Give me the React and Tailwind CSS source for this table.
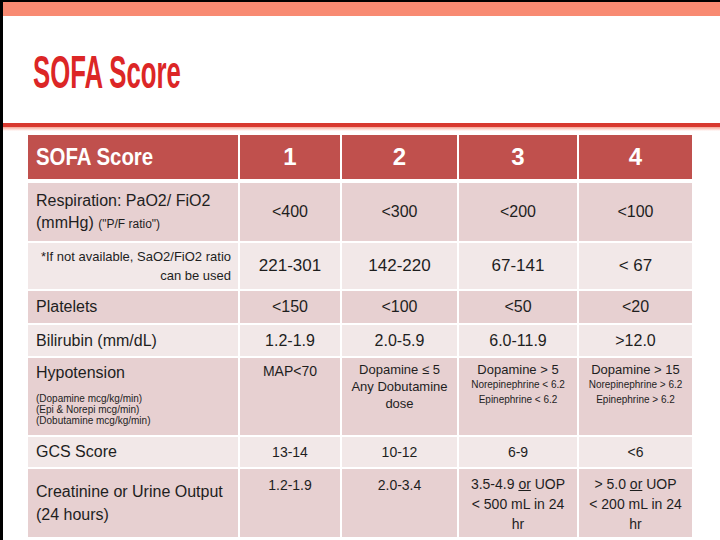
const font = { fontFamily: '"Liberation Sans", Arial, sans-serif' };

const cols = ["w-[210px]", "w-[100px]", "w-[115px]", "w-[118px]", "w-[113px]"];

const Cell = ({ i, className = "", children }) => (
  <div className={`${cols[i]} shrink-0 ${className}`}>{children}</div>
);

const SimpleRow = ({ h, bg, label, values, size = "text-[16px]" }) => (
  <div className={`flex gap-[2px] ${h}`}>
    <Cell i={0} className={`${bg} flex items-center pl-[8px] text-[16px]`}>
      {label}
    </Cell>
    {values.map((v, k) => (
      <Cell key={k} i={k + 1} className={`${bg} flex items-center justify-center ${size}`}>
        {v}
      </Cell>
    ))}
  </div>
);

export default function App() {
  const dark = "bg-[#e7d0d1]";
  const light = "bg-[#f2e8e8]";

  return (
    <div
      className="w-[720px] h-[540px] bg-white border-t-2 border-l-[3px] border-black overflow-hidden flex flex-col text-[#1e1e1e]"
      style={font}
    >
      <div className="h-[14px] bg-[#f88a72] shrink-0" />
      <div className="h-[107px] shrink-0 pt-[33px] pl-[30px]">
        <div className="inline-block origin-left scale-x-[0.56] text-[46px] leading-[46px] font-bold text-[#dc2626] whitespace-nowrap">
          SOFA Score
        </div>
      </div>
      <div className="h-[4px] bg-[#d8392f] shrink-0" />
      <div className="h-[4px] bg-gradient-to-b from-[#f4a394] to-white shrink-0" />
      <div className="h-[4px] shrink-0" />

      <div className="flex flex-col gap-[2px] pl-[25px]">
        {/* header */}
        <div className="flex gap-[2px] h-[44px] mb-[2px] text-white font-bold">
          <Cell i={0} className="bg-[#c0504d] flex items-center pl-[8px]">
            <span className="inline-block origin-left scale-x-[0.85] text-[24px] whitespace-nowrap">
              SOFA Score
            </span>
          </Cell>
          {["1", "2", "3", "4"].map((n, k) => (
            <Cell key={n} i={k + 1} className="bg-[#c0504d] flex items-center justify-center text-[24px]">
              {n}
            </Cell>
          ))}
        </div>

        {/* respiration */}
        <div className="flex gap-[2px] h-[58px]">
          <Cell i={0} className={`${dark} flex flex-col justify-center pl-[8px] text-[16px] leading-[22px]`}>
            <div>Respiration: PaO2/ FiO2</div>
            <div>
              (mmHg) <span className="text-[12px]">("P/F ratio")</span>
            </div>
          </Cell>
          {["<400", "<300", "<200", "<100"].map((v, k) => (
            <Cell key={k} i={k + 1} className={`${dark} flex items-center justify-center text-[16px]`}>
              {v}
            </Cell>
          ))}
        </div>

        {/* SaO2 */}
        <div className="flex gap-[2px] h-[46px]">
          <Cell i={0} className={`${light} flex flex-col justify-center items-end pr-[7px] text-[13px] leading-[19px]`}>
            <div>*If not available, SaO2/FiO2 ratio</div>
            <div>can be used</div>
          </Cell>
          {["221-301", "142-220", "67-141", "< 67"].map((v, k) => (
            <Cell key={k} i={k + 1} className={`${light} flex items-center justify-center text-[17px]`}>
              {v}
            </Cell>
          ))}
        </div>

        <SimpleRow h="h-[32px]" bg={dark} label="Platelets" values={["<150", "<100", "<50", "<20"]} />
        <SimpleRow h="h-[31px]" bg={light} label="Bilirubin (mm/dL)" values={["1.2-1.9", "2.0-5.9", "6.0-11.9", ">12.0"]} />

        {/* hypotension */}
        <div className="flex gap-[2px] h-[77px]">
          <Cell i={0} className={`${dark} pl-[8px] pt-[5px]`}>
            <div className="text-[16px] leading-[20px]">Hypotension</div>
            <div className="text-[10px] leading-[11px] mt-[10px]">(Dopamine mcg/kg/min)</div>
            <div className="text-[10px] leading-[11px]">(Epi &amp; Norepi mcg/min)</div>
            <div className="text-[10px] leading-[12px]">(Dobutamine mcg/kg/min)</div>
          </Cell>
          <Cell i={1} className={`${dark} text-center pt-[5px] text-[14px] leading-[16px]`}>
            MAP&lt;70
          </Cell>
          <Cell i={2} className={`${dark} text-center pt-[3px] text-[13px] leading-[17px]`}>
            <div>Dopamine ≤ 5</div>
            <div>Any Dobutamine</div>
            <div>dose</div>
          </Cell>
          <Cell i={3} className={`${dark} text-center pt-[4px]`}>
            <div className="text-[13px] leading-[15px]">Dopamine &gt; 5</div>
            <div className="text-[10px] leading-[16px]">Norepinephrine &lt; 6.2</div>
            <div className="text-[10px] leading-[14px]">Epinephrine &lt; 6.2</div>
          </Cell>
          <Cell i={4} className={`${dark} text-center pt-[4px]`}>
            <div className="text-[13px] leading-[15px]">Dopamine &gt; 15</div>
            <div className="text-[10px] leading-[16px]">Norepinephrine &gt; 6.2</div>
            <div className="text-[10px] leading-[14px]">Epinephrine &gt; 6.2</div>
          </Cell>
        </div>

        <SimpleRow
          h="h-[30px]"
          bg={light}
          label="GCS Score"
          values={["13-14", "10-12", "6-9", "<6"]}
          size="text-[14px]"
        />

        {/* creatinine */}
        <div className="flex gap-[2px] h-[68px]">
          <Cell i={0} className={`${dark} flex flex-col justify-center pl-[8px] text-[16px] leading-[23px]`}>
            <div>Creatinine or Urine Output</div>
            <div>(24 hours)</div>
          </Cell>
          <Cell i={1} className={`${dark} text-center pt-[6px] text-[14px] leading-[20px]`}>
            1.2-1.9
          </Cell>
          <Cell i={2} className={`${dark} text-center pt-[6px] text-[14px] leading-[20px]`}>
            2.0-3.4
          </Cell>
          <Cell i={3} className={`${dark} text-center pt-[5px] text-[14px] leading-[20px]`}>
            <div>
              3.5-4.9 <span className="underline">or</span> UOP
            </div>
            <div>&lt; 500 mL in 24</div>
            <div>hr</div>
          </Cell>
          <Cell i={4} className={`${dark} text-center pt-[5px] text-[14px] leading-[20px]`}>
            <div>
              &gt; 5.0 <span className="underline">or</span> UOP
            </div>
            <div>&lt; 200 mL in 24</div>
            <div>hr</div>
          </Cell>
        </div>
      </div>
    </div>
  );
}
